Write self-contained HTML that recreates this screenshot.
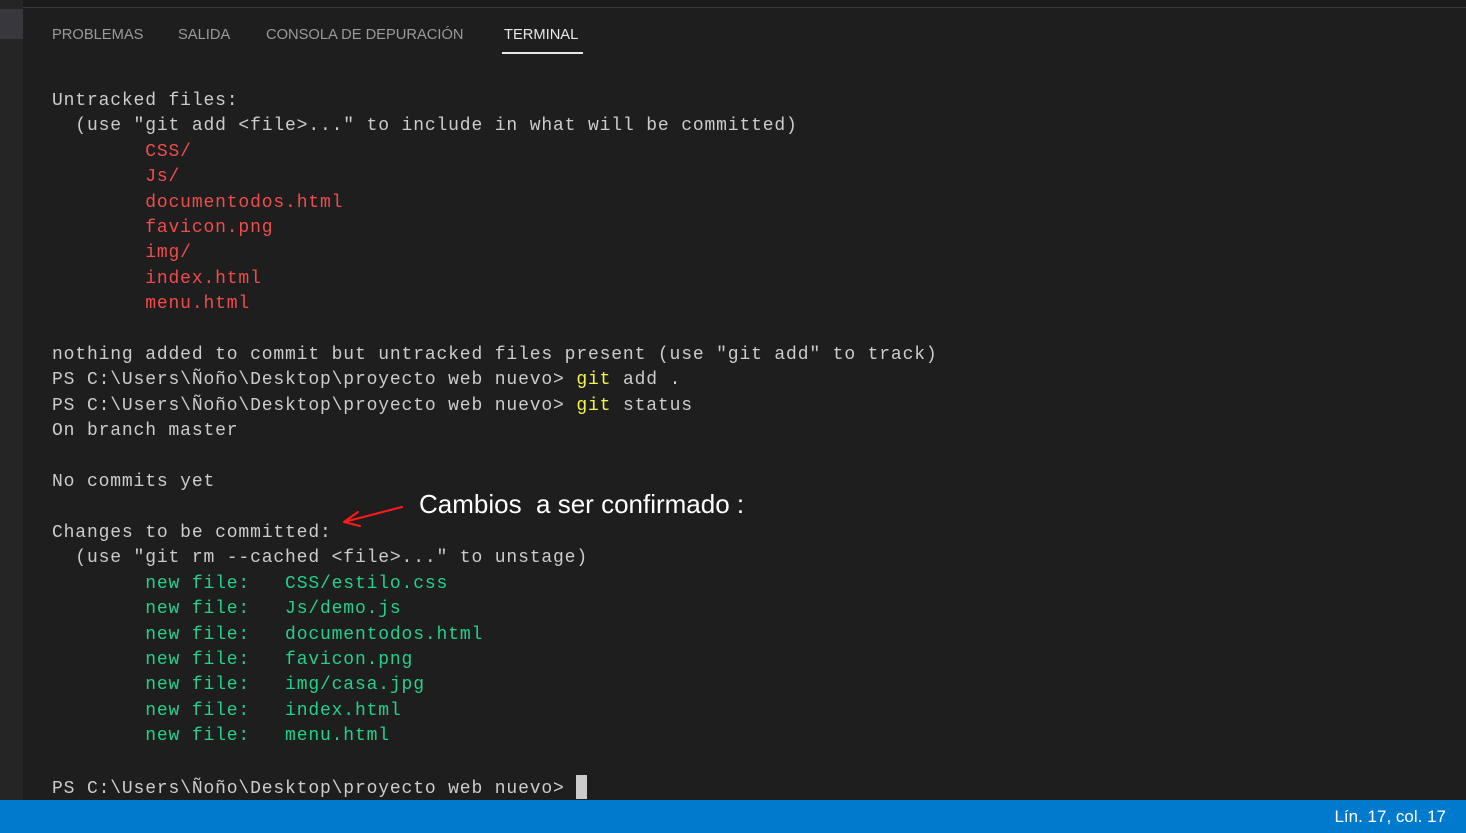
<!DOCTYPE html>
<html><head><meta charset="utf-8"><style>
html,body{margin:0;padding:0;width:1466px;height:833px;overflow:hidden;background:#1e1e1e;position:relative}
.side{position:absolute;left:0;top:0;width:23px;height:800px;background:#252526}
.side .a{position:absolute;left:0;top:9px;width:23px;height:30px;background:#37373d}
.top{position:absolute;left:0;top:0;width:1466px;height:7px;background:#1b1b1b;border-bottom:1px solid #3a3a3a}
.tabs{position:absolute;top:27px;left:52px;font:14.7px "Liberation Sans",sans-serif;color:#9a9a9a}
.tabs span{position:absolute;white-space:nowrap;top:0}
.ul{position:absolute;left:502px;top:52px;width:81px;height:2px;background:#e7e7e7}
pre{position:absolute;left:52px;top:89px;margin:0;font:18px/25.4px "Liberation Mono",monospace;letter-spacing:0.85px;color:#cccccc}
.r{color:#f14c4c}.g{color:#23d18b}.y{color:#f5f543}
.cur{display:inline-block;width:11px;height:24px;background:#cccccc;vertical-align:-6px}
.note{position:absolute;left:419px;top:489px;font:26px "Liberation Sans","DejaVu Sans",sans-serif;color:#fff;white-space:pre}
.status{position:absolute;left:0;top:800px;width:1466px;height:33px;background:#007acc}
.status span{position:absolute;right:20px;top:7px;font:17px "Liberation Sans",sans-serif;color:#fff}
</style></head><body>
<div class="top"></div>
<div class="side"><div class="a"></div></div>
<div class="tabs"><span style="left:0">PROBLEMAS</span><span style="left:126px">SALIDA</span><span style="left:214px">CONSOLA DE DEPURACIÓN</span><span style="left:452px;color:#e7e7e7">TERMINAL</span></div>
<div class="ul"></div>
<pre>Untracked files:
  (use "git add &lt;file&gt;..." to include in what will be committed)
        <span class="r">CSS/</span>
        <span class="r">Js/</span>
        <span class="r">documentodos.html</span>
        <span class="r">favicon.png</span>
        <span class="r">img/</span>
        <span class="r">index.html</span>
        <span class="r">menu.html</span>

nothing added to commit but untracked files present (use "git add" to track)
PS C:\Users\Ñoño\Desktop\proyecto web nuevo&gt; <span class="y">git</span> add .
PS C:\Users\Ñoño\Desktop\proyecto web nuevo&gt; <span class="y">git</span> status
On branch master

No commits yet

Changes to be committed:
  (use "git rm --cached &lt;file&gt;..." to unstage)
        <span class="g">new file:   CSS/estilo.css</span>
        <span class="g">new file:   Js/demo.js</span>
        <span class="g">new file:   documentodos.html</span>
        <span class="g">new file:   favicon.png</span>
        <span class="g">new file:   img/casa.jpg</span>
        <span class="g">new file:   index.html</span>
        <span class="g">new file:   menu.html</span>

PS C:\Users\Ñoño\Desktop\proyecto web nuevo&gt; <span class="cur"></span></pre>
<div class="note">Cambios  a ser confirmado :</div>
<svg style="position:absolute;left:0;top:0" width="1466" height="833"><path d="M402 507 L344 522 M344 522 L358 512 M344 522 L360 526" stroke="#ff1a1a" stroke-width="2" fill="none" stroke-linecap="round"/></svg>
<div class="status"><span>Lín. 17, col. 17</span></div>
</body></html>
